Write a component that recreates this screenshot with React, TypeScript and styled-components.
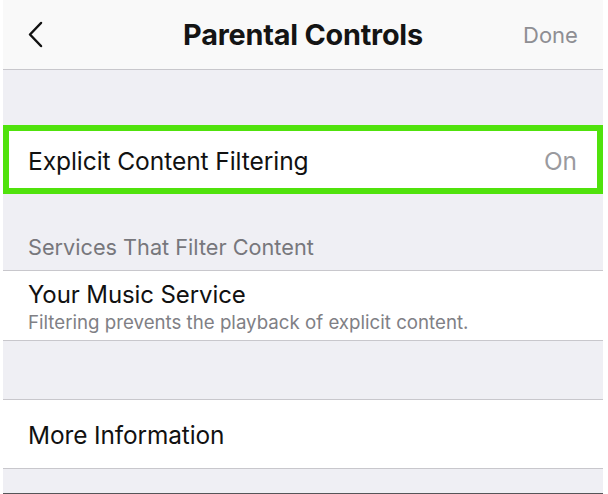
import React from "react";
import styled, { createGlobalStyle } from "styled-components";

const Global = createGlobalStyle`
  html, body { margin: 0; padding: 0; background: #ffffff; }
  body { font-family: Inter, "Noto Sans", "Liberation Sans", sans-serif; -webkit-font-smoothing: antialiased; }
`;

const Screen = styled.div`
  width: 600px;
  height: 494px;
  margin-left: 3px;
  background: #efeff4;
  display: flex;
  flex-direction: column;
  border-bottom: 1px solid #555558;
  box-sizing: border-box;
  overflow: hidden;
`;

const NavBar = styled.header`
  height: 70px;
  box-sizing: border-box;
  background: #f9f9f9;
  border-bottom: 1px solid #c8c7cc;
  display: grid;
  grid-template-columns: 80px 1fr 80px;
  align-items: center;
  flex-shrink: 0;
`;

const BackButton = styled.div`
  display: flex;
  align-items: center;
  padding-left: 24px;
  color: #111;
`;

const Title = styled.h1`
  margin: 0;
  text-align: center;
  font-size: 28.8px;
  font-weight: 700;
  color: #141414;
  letter-spacing: -0.2px;
`;

const Done = styled.div`
  text-align: right;
  padding-right: 27px;
  font-size: 22px;
  color: #8e8e93;
`;

const Spacer = styled.div<{ $h: number }>`
  height: ${(p) => p.$h}px;
  flex-shrink: 0;
`;

const Highlighted = styled.div`
  height: 69px;
  box-sizing: border-box;
  background: #ffffff;
  border: 6px solid #50e20c;
  display: flex;
  align-items: center;
  justify-content: space-between;
  padding: 3px 20px 0 19px;
  flex-shrink: 0;
`;

const RowLabel = styled.span<{ $size?: number }>`
  font-size: ${(p) => p.$size ?? 24.4}px;
  color: #111;
  letter-spacing: -0.1px;
`;

const RowValue = styled.span`
  font-size: 24.4px;
  color: #9a9a9e;
`;

const SectionHeader = styled.div`
  height: 77px;
  box-sizing: border-box;
  display: flex;
  align-items: flex-end;
  padding: 0 0 10px 25px;
  font-size: 21.7px;
  color: #77777c;
  border-bottom: 1px solid #c8c7cc;
  flex-shrink: 0;
`;

const Cell = styled.div<{ $h: number; $top?: boolean }>`
  height: ${(p) => p.$h}px;
  box-sizing: border-box;
  background: #ffffff;
  border-bottom: 1px solid #c8c7cc;
  ${(p) => (p.$top ? "border-top: 1px solid #c8c7cc;" : "")}
  display: flex;
  flex-direction: column;
  justify-content: center;
  padding: 2px 0 0 25px;
  flex-shrink: 0;
`;

const Subtitle = styled.span`
  font-size: 18.7px;
  color: #808085;
  margin-top: 2px;
`;

export default function App() {
  return (
    <>
      <Global />
      <Screen>
        <NavBar>
          <BackButton>
            <svg width="17" height="27" viewBox="0 0 17 27" fill="none">
              <path d="M14 2 L3 13.5 L14 25" stroke="#111" strokeWidth="2.5" strokeLinecap="round" strokeLinejoin="round" />
            </svg>
          </BackButton>
          <Title>Parental Controls</Title>
          <Done>Done</Done>
        </NavBar>
        <Spacer $h={55} />
        <Highlighted>
          <RowLabel $size={24.6}>Explicit Content Filtering</RowLabel>
          <RowValue>On</RowValue>
        </Highlighted>
        <SectionHeader>Services That Filter Content</SectionHeader>
        <Cell $h={70}>
          <RowLabel $size={24}>Your Music Service</RowLabel>
          <Subtitle>Filtering prevents the playback of explicit content.</Subtitle>
        </Cell>
        <Spacer $h={58} />
        <Cell $h={70} $top>
          <RowLabel>More Information</RowLabel>
        </Cell>
      </Screen>
    </>
  );
}
